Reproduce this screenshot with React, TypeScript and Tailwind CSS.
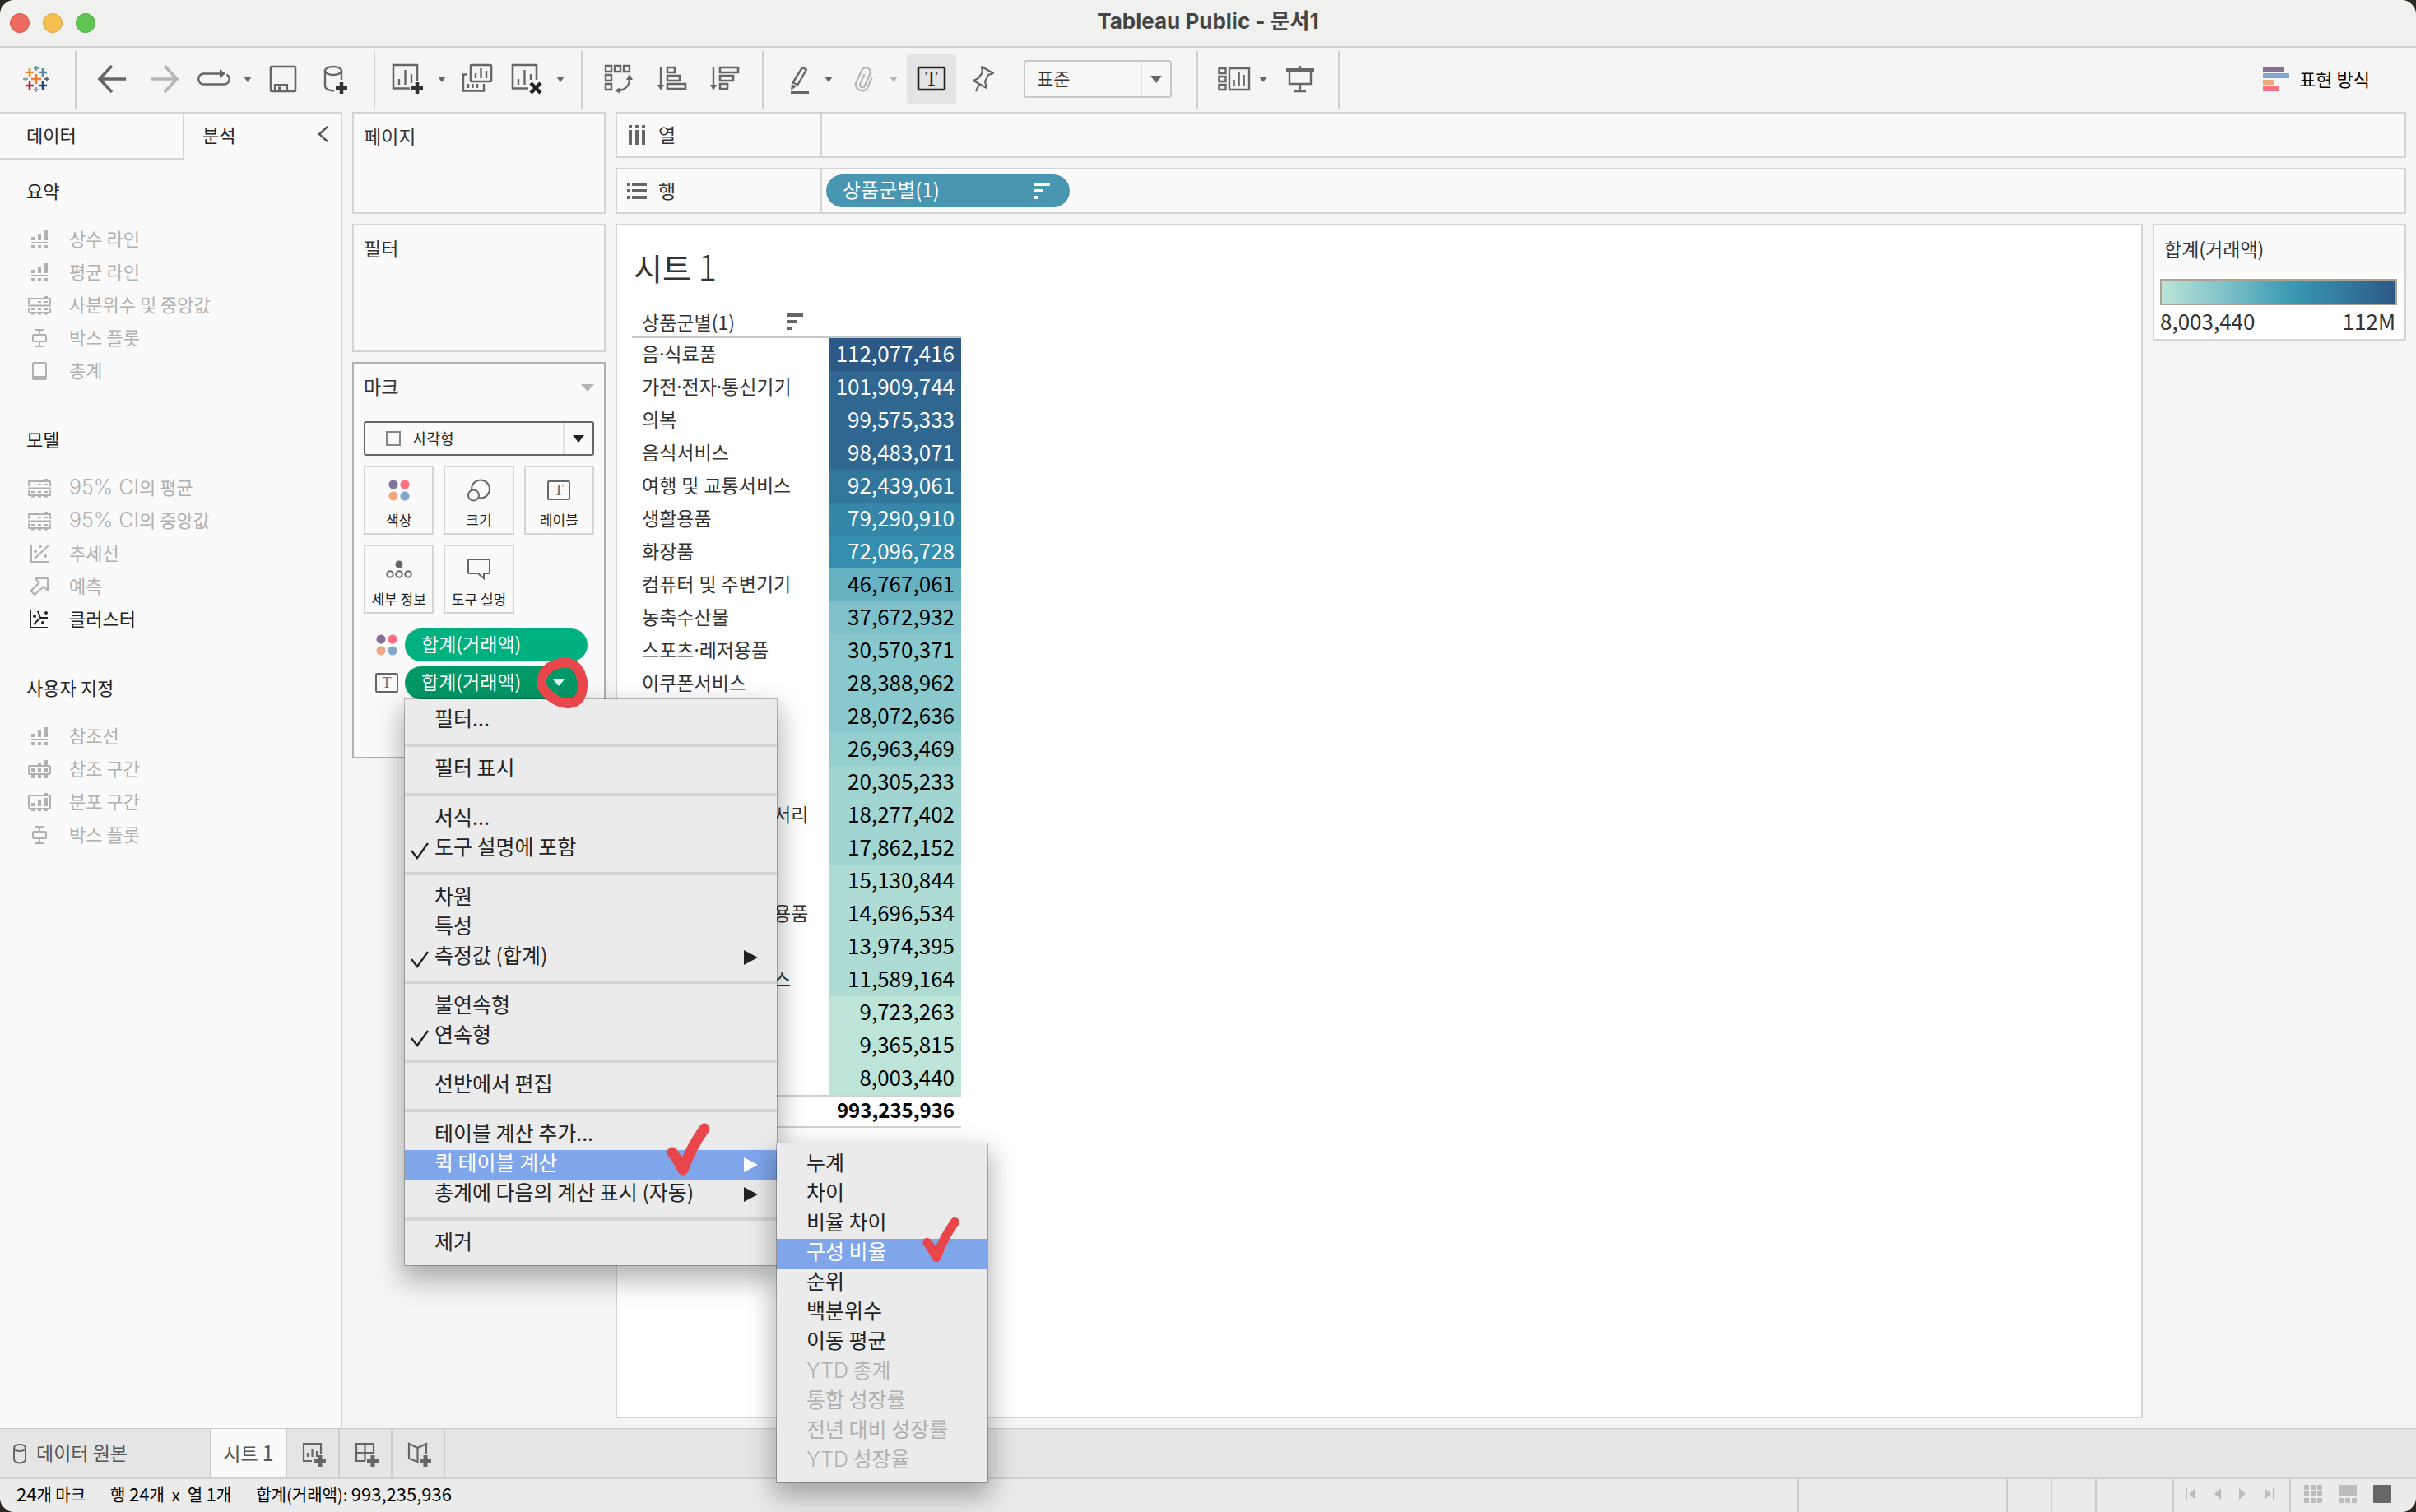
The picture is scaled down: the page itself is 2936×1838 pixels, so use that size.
import React from 'react';
import clsx from 'clsx';

type IconProps = { className?: string };

const PALETTE = [
  '#bce4d8', '#aedcd5', '#a1d5d2', '#95cecf', '#89c8cc', '#7ec1ca', '#72bac6', '#66b2c2', '#59acbe', '#4ba5ba',
  '#419eb6', '#3b96b2', '#358ead', '#3586a7', '#347ea1', '#32779b', '#316f96', '#2f6790', '#2d608a', '#2c5985',
];

const ROWS = [
  { label: '음·식료품', value: 112077416 },
  { label: '가전·전자·통신기기', value: 101909744 },
  { label: '의복', value: 99575333 },
  { label: '음식서비스', value: 98483071 },
  { label: '여행 및 교통서비스', value: 92439061 },
  { label: '생활용품', value: 79290910 },
  { label: '화장품', value: 72096728 },
  { label: '컴퓨터 및 주변기기', value: 46767061 },
  { label: '농축수산물', value: 37672932 },
  { label: '스포츠·레저용품', value: 30570371 },
  { label: '이쿠폰서비스', value: 28388962 },
  { label: '가구', value: 28072636 },
  { label: '신발', value: 26963469 },
  { label: '가방', value: 20305233 },
  { label: '패션용품 및 액세서리', value: 18277402 },
  { label: '아동·유아용품', value: 17862152 },
  { label: '서적', value: 15130844 },
  { label: '자동차 및 자동차용품', value: 14696534 },
  { label: '애완용품', value: 13974395 },
  { label: '문화 및 레저서비스', value: 11589164 },
  { label: '기타서비스', value: 9723263 },
  { label: '기타', value: 9365815 },
  { label: '사무·문구', value: 8003440 },
];

const MIN = 8003440;
const MAX = 112077416;

const colorFor = (value: number) => {
  const t = (value - MIN) / (MAX - MIN);
  return PALETTE[Math.round(t * (PALETTE.length - 1))];
};

/* ---------- toolbar icons, all on a 40px grid ---------- */

const ToolIcon = ({ children, className = 'text-[#666]' }: { children: React.ReactNode; className?: string }) => (
  <svg width="40" height="40" viewBox="0 0 40 40" fill="none" stroke="currentColor" strokeWidth="2.6" className={clsx('shrink-0', className)}>
    {children}
  </svg>
);

const Caret = ({ className = 'text-[#666]' }: IconProps) => (
  <svg width="10" height="7" viewBox="0 0 10 7" className={clsx('shrink-0', className)}>
    <path d="M0 0H10L5 7Z" fill="currentColor" />
  </svg>
);

const LOGO = [
  [19, 20, 6, '#eb7a2e', 2.6],
  [11, 12, 5, '#eb912b', 2.6],
  [27, 12, 5, '#59879b', 2.6],
  [11, 28, 5, '#c8203c', 2.6],
  [27, 28, 5, '#1f447e', 2.6],
  [19, 7, 3, '#7199a6', 2],
  [6, 20, 3, '#7aa1b8', 2],
  [32, 20, 3, '#5b6591', 2],
  [19, 33, 3, '#8f9bbd', 2],
] as const;

const LogoIcon = () => (
  <ToolIcon>
    {LOGO.map(([x, y, r, color, w]) => (
      <path key={`${x}-${y}`} d={`M${x - r} ${y}H${x + r}M${x} ${y - r}V${y + r}`} stroke={color} strokeWidth={w} />
    ))}
  </ToolIcon>
);

const BackIcon = () => (
  <ToolIcon>
    <path d="M37 20H5M20 4L5 20L20 36" strokeWidth="3.6" />
  </ToolIcon>
);

const ForwardIcon = () => (
  <ToolIcon className="text-[#b4b4b4]">
    <path d="M3 20H35M20 4L35 20L20 36" strokeWidth="3.6" />
  </ToolIcon>
);

const ReplayIcon = () => (
  <ToolIcon>
    <path d="M28 13.500H7.500A6.300 6.300 0 0 0 1.300 20A6.300 6.300 0 0 0 7.500 26.500H32.500A6.300 6.300 0 0 0 38.700 20A6.500 6.500 0 0 0 35.500 14.500" strokeWidth="2.400" />
    <path d="M27 8L34 13.500L27 19Z" fill="currentColor" stroke="none" />
  </ToolIcon>
);

const SaveIcon = () => (
  <ToolIcon>
    <rect x="5" y="5" width="30" height="30" rx="1" />
    <path d="M10 35V27H25V35" strokeWidth="2.200" />
    <rect x="14" y="29.500" width="4" height="6" fill="currentColor" stroke="none" />
  </ToolIcon>
);

const AddDataIcon = () => (
  <ToolIcon>
    <ellipse cx="17" cy="10" rx="10" ry="5" strokeWidth="2.400" />
    <path d="M7 10V29Q8 34 18 34.500M27 10V21" strokeWidth="2.400" />
    <path d="M20 31H34M27 24V38" stroke="#333" strokeWidth="4.500" />
  </ToolIcon>
);

const NewSheetIcon = () => (
  <ToolIcon>
    <path d="M23 31.500H3V3H32V22" />
    <path d="M10 20V27M17.500 9V27M25 14V25" strokeWidth="2.400" />
    <path d="M25 31H39M32 24V38" stroke="#333" strokeWidth="4.500" />
  </ToolIcon>
);

const DuplicateIcon = () => (
  <ToolIcon>
    <rect x="12" y="3" width="25" height="20" rx="1" />
    <path d="M18 13V19M24.500 7V19M31 10V19" strokeWidth="2.400" />
    <path d="M8 14.500H3V34.500H28V26M9 26V31M14.500 26V31M20 26V31" strokeWidth="2.400" />
  </ToolIcon>
);

const ClearSheetIcon = () => (
  <ToolIcon>
    <path d="M22 31.500H3V3H32V21" />
    <path d="M10 20V27M17.500 9V27M25 14V21" strokeWidth="2.400" />
    <path d="M25 25L37 37M37 25L25 37" stroke="#222" strokeWidth="4.500" />
  </ToolIcon>
);

const SwapIcon = () => (
  <ToolIcon>
    <path d="M5 4h7v7h-7ZM16 4h7v7h-7ZM27 4h7v7h-7ZM5 15h7v7h-7ZM5 26h7v7h-7Z" strokeWidth="2.400" />
    <path d="M34 20C34 28 29 33 21 34" strokeWidth="2.400" />
    <path d="M34 14L30 21H38ZM16 34L23 30V38Z" fill="currentColor" stroke="none" />
  </ToolIcon>
);

const SortAscIcon = () => (
  <ToolIcon>
    <path d="M6 5V30" strokeWidth="2.400" />
    <path d="M2 27H10L6 34Z" fill="currentColor" stroke="none" />
    <path d="M14 6h9v6h-9ZM14 16h15v6h-15ZM14 26h22v6h-22Z" />
  </ToolIcon>
);

const SortDescIcon = () => (
  <ToolIcon>
    <path d="M6 5V30" strokeWidth="2.400" />
    <path d="M2 27H10L6 34Z" fill="currentColor" stroke="none" />
    <path d="M14 6h22v6h-22ZM14 16h16v6h-16ZM14 26h9v6h-9Z" />
  </ToolIcon>
);

const HighlightIcon = () => (
  <ToolIcon>
    <path d="M23 6L28 8.500L17.500 27L11.500 24.500Z" strokeWidth="2.400" strokeLinejoin="round" />
    <path d="M10 26L16 29L9 34Z" fill="currentColor" stroke="none" />
    <rect x="9" y="35" width="22" height="3" fill="currentColor" stroke="none" />
  </ToolIcon>
);

const ClipIcon = () => (
  <ToolIcon className="text-[#b4b4b4]">
    <path transform="rotate(24 20 20)" d="M19 14V27A3 3 0 0 0 25 27V11A5.500 5.500 0 0 0 14 11V29A8 8 0 0 0 29 29V14" strokeWidth="2.200" />
  </ToolIcon>
);

const LabelIcon = ({ className = 'text-[#222]' }: IconProps) => (
  <ToolIcon className={className}>
    <rect x="4" y="6" width="32" height="27" rx="1" />
    <text x="20" y="28" textAnchor="middle" fontSize="25" fill="currentColor" stroke="none" className="font-['Liberation_Serif',serif]">
      T
    </text>
  </ToolIcon>
);

const PinIcon = () => (
  <ToolIcon>
    <path d="M18 5L32 13L26 15L22 23L24 31L8 22L14 19L19 12ZM15 26L11 35" strokeWidth="2.200" strokeLinejoin="round" />
  </ToolIcon>
);

const CardsIcon = () => (
  <ToolIcon>
    <path d="M1.500 7h8v6h-8ZM1.500 17h8v6h-8ZM1.500 27h8v6h-8ZM14 7H38V33H14Z" strokeWidth="2.400" />
    <path d="M19.500 21V29M25.500 11V29M31.500 15V29" />
  </ToolIcon>
);

const PresentIcon = () => (
  <ToolIcon>
    <path d="M7 10V26H33V10M20 26V35M13 35H27M20 4V8" strokeWidth="2.400" />
    <rect x="3" y="7" width="34" height="4" fill="currentColor" stroke="none" />
  </ToolIcon>
);

/* ---------- analytics pane icons ---------- */

const PaneIcon = ({ children }: { children: React.ReactNode }) => (
  <svg width="28" height="26" viewBox="0 0 28 26" fill="none" stroke="currentColor" strokeWidth="2" className="shrink-0">
    {children}
  </svg>
);

const LineIcon = () => (
  <PaneIcon>
    <path d="M4 10h4v4h-4ZM12 6h4v8h-4ZM20 2h4v12h-4ZM4 16h20v2h-20ZM4 20h4v4h-4ZM12 20h4v4h-4ZM20 20h4v4h-4Z" fill="currentColor" stroke="none" />
  </PaneIcon>
);

const QuartileIcon = () => (
  <PaneIcon>
    <path d="M1 11V5H27V11M0 13.500H28M1 16V22H27V16" strokeWidth="1.800" />
    <path d="M12 8h4v2h-4ZM20 8h4v2h-4ZM4 17h4v2h-4ZM12 17h4v2h-4ZM20 17h4v2h-4ZM4 22h4v2.500h-4ZM12 22h4v2.500h-4ZM20 22h4v2.500h-4ZM20 2h4v3h-4Z" fill="currentColor" stroke="none" />
  </PaneIcon>
);

const BoxPlotIcon = () => (
  <PaneIcon>
    <rect x="6" y="9" width="16" height="8" rx="1" />
    <path d="M9 3H19M14 3V9M14 17V23M9 23H19" />
  </PaneIcon>
);

const TotalIcon = () => (
  <PaneIcon>
    <rect x="6" y="3" width="16" height="20" rx="1" />
    <rect x="6" y="19" width="16" height="4" fill="currentColor" stroke="none" />
  </PaneIcon>
);

const TrendIcon = () => (
  <PaneIcon>
    <path d="M4 2V23H25M8 19L25 3" />
    <path d="M7 10a2 2 0 1 0 4 0a2 2 0 1 0-4 0M13 4a2 2 0 1 0 4 0a2 2 0 1 0-4 0M19 16a2 2 0 1 0 4 0a2 2 0 1 0-4 0" fill="currentColor" stroke="none" />
  </PaneIcon>
);

const ForecastIcon = () => (
  <PaneIcon>
    <path d="M9 3H24V18L19 13L8 23L3.500 18L13.500 8.500Z" strokeLinejoin="round" />
  </PaneIcon>
);

const ClusterIcon = () => (
  <PaneIcon>
    <path d="M3 2V23H24M7 19L15 11H24M15 11L12 3" />
    <path d="M6 9a2 2 0 1 0 4 0a2 2 0 1 0-4 0M20 5a2 2 0 1 0 4 0a2 2 0 1 0-4 0M16 17a2 2 0 1 0 4 0a2 2 0 1 0-4 0" fill="currentColor" stroke="none" />
  </PaneIcon>
);

const BandIcon = () => (
  <PaneIcon>
    <rect x="1" y="9" width="26" height="10" rx="1" />
    <path d="M4 12h4v4h-4ZM12 12h4v4h-4ZM20 12h4v4h-4ZM12 6h4v2h-4ZM20 2h4v6h-4ZM4 20h4v4h-4ZM12 20h4v4h-4ZM20 20h4v4h-4Z" fill="currentColor" stroke="none" />
  </PaneIcon>
);

const DistributionIcon = () => (
  <PaneIcon>
    <rect x="1" y="5" width="26" height="16" rx="1" />
    <path d="M4 14h4v4h-4ZM12 10h4v8h-4ZM20 8h4v10h-4ZM20 2h4v2h-4ZM4 22h4v2h-4ZM12 22h4v2h-4ZM20 22h4v2h-4Z" fill="currentColor" stroke="none" />
  </PaneIcon>
);

const SECTIONS = [
  {
    title: '요약',
    items: [
      { label: '상수 라인', icon: LineIcon },
      { label: '평균 라인', icon: LineIcon },
      { label: '사분위수 및 중앙값', icon: QuartileIcon },
      { label: '박스 플롯', icon: BoxPlotIcon },
      { label: '총계', icon: TotalIcon },
    ],
  },
  {
    title: '모델',
    items: [
      { latin: '95% CI', label: '의 평균', icon: QuartileIcon },
      { latin: '95% CI', label: '의 중앙값', icon: QuartileIcon },
      { label: '추세선', icon: TrendIcon },
      { label: '예측', icon: ForecastIcon },
      { label: '클러스터', icon: ClusterIcon, enabled: true },
    ],
  },
  {
    title: '사용자 지정',
    items: [
      { label: '참조선', icon: LineIcon },
      { label: '참조 구간', icon: BandIcon },
      { label: '분포 구간', icon: DistributionIcon },
      { label: '박스 플롯', icon: BoxPlotIcon },
    ],
  },
] as { title: string; items: { latin?: string; label: string; icon: React.FC; enabled?: boolean }[] }[];

const Latin = ({ children }: { children: React.ReactNode }) => (
  <span className="font-['Inter',sans-serif] text-[25px] leading-none font-light">{children}</span>
);

/* ---------- marks card icons ---------- */

const ColorDots = () => (
  <svg width="28" height="28" viewBox="0 0 28 28" className="shrink-0">
    <circle cx="7" cy="7" r="5.600" fill="#857196" />
    <circle cx="21" cy="7" r="5.600" fill="#f97080" />
    <circle cx="7" cy="21" r="5.600" fill="#f1a67b" />
    <circle cx="21" cy="21" r="5.600" fill="#83a5cb" />
  </svg>
);

const SizeIcon = () => (
  <svg width="28" height="28" viewBox="0 0 28 28" fill="none" stroke="#666" strokeWidth="2">
    <circle cx="16" cy="12.500" r="11" />
    <circle cx="7.500" cy="20" r="6.500" fill="#fafafa" />
  </svg>
);

const SmallLabelIcon = () => (
  <svg width="28" height="28" viewBox="0 0 28 28" fill="none" stroke="#666" strokeWidth="2" className="shrink-0">
    <rect x="1" y="3" width="26" height="22" rx="1" />
    <text x="14" y="20" textAnchor="middle" fontSize="18" fill="#666" stroke="none" className="font-['Liberation_Serif',serif]">
      T
    </text>
  </svg>
);

const DetailIcon = () => (
  <svg width="32" height="28" viewBox="0 0 32 28" fill="none" stroke="#666" strokeWidth="2">
    <circle cx="16" cy="8" r="4.500" fill="#666" stroke="none" />
    <circle cx="5" cy="20" r="3.700" />
    <circle cx="16" cy="20" r="3.700" />
    <circle cx="27" cy="20" r="3.700" />
  </svg>
);

const TooltipIcon = () => (
  <svg width="28" height="28" viewBox="0 0 28 28" fill="none" stroke="#666" strokeWidth="2">
    <path d="M2 2H26Q27 2 27 3V18Q27 19 26 19H20V25L13 19H2Q1 19 1 18V3Q1 2 2 2Z" />
  </svg>
);

const MARK_BUTTONS = [
  { label: '색상', icon: ColorDots },
  { label: '크기', icon: SizeIcon },
  { label: '레이블', icon: SmallLabelIcon },
  { label: '세부 정보', icon: DetailIcon },
  { label: '도구 설명', icon: TooltipIcon },
];

const SortBars = ({ className }: IconProps) => (
  <svg width="20" height="20" viewBox="0 0 20 20" fill="currentColor" className={clsx('shrink-0', className)}>
    <path d="M0 0h20v4h-20ZM0 8h12v4h-12ZM0 16h6v4h-6Z" />
  </svg>
);

const RedCheck = ({ className }: IconProps) => (
  <svg viewBox="0 0 56 66" fill="none" stroke="#e8464b" strokeWidth="13" strokeLinecap="round" strokeLinejoin="round" className={className}>
    <path d="M8 37Q15 46 21 58Q30 32 47 8" />
  </svg>
);

/* ---------- menus ---------- */

interface MenuEntry {
  label: string;
  latin?: string;
  checked?: boolean;
  arrow?: boolean;
  active?: boolean;
  disabled?: boolean;
}

const MENU: MenuEntry[][] = [
  [{ label: '필터...' }],
  [{ label: '필터 표시' }],
  [{ label: '서식...' }, { label: '도구 설명에 포함', checked: true }],
  [{ label: '차원' }, { label: '특성' }, { label: '측정값 (합계)', checked: true, arrow: true }],
  [{ label: '불연속형' }, { label: '연속형', checked: true }],
  [{ label: '선반에서 편집' }],
  [
    { label: '테이블 계산 추가...' },
    { label: '퀵 테이블 계산', arrow: true, active: true },
    { label: '총계에 다음의 계산 표시 (자동)', arrow: true },
  ],
  [{ label: '제거' }],
];

const SUBMENU: MenuEntry[] = [
  { label: '누계' },
  { label: '차이' },
  { label: '비율 차이' },
  { label: '구성 비율', active: true },
  { label: '순위' },
  { label: '백분위수' },
  { label: '이동 평균' },
  { latin: 'YTD', label: ' 총계', disabled: true },
  { label: '통합 성장률', disabled: true },
  { label: '전년 대비 성장률', disabled: true },
  { latin: 'YTD', label: ' 성장율', disabled: true },
];

const MenuItem = ({ entry, children }: { entry: MenuEntry; children?: React.ReactNode }) => (
  <div className="relative">
    <button
      type="button"
      role="menuitem"
      disabled={entry.disabled}
      className={clsx(
        'flex h-9 w-full items-center pr-[23px] pb-2 text-left text-[25px] leading-7 whitespace-nowrap',
        entry.active ? 'bg-[#7fa5eb] text-white' : entry.disabled ? 'text-[#b0b0b0]' : 'text-[#222]',
      )}
    >
      <span className="flex w-9 shrink-0 items-center pt-3 pl-[6px]">
        {entry.checked && (
          <svg width="24" height="24" viewBox="0 0 24 24" fill="none" stroke="currentColor" strokeWidth="2.400">
            <path d="M2 12L9 21L22 3" />
          </svg>
        )}
      </span>
      <span className="flex-1">
        {entry.latin && <Latin>{entry.latin}</Latin>}
        {entry.label}
      </span>
      {entry.arrow && (
        <svg width="17" height="18" viewBox="0 0 17 18" className="mt-2">
          <path d="M0 0L17 9L0 18Z" fill="currentColor" />
        </svg>
      )}
    </button>
    {children}
  </div>
);

const SubMenu = () => (
  <div role="menu" className="absolute -top-2 left-full z-20 w-64 bg-[#ebebeb] py-2 shadow-[0_0_0_1px_rgba(0,0,0,0.25),0_14px_30px_4px_rgba(0,0,0,0.3)]">
    {SUBMENU.map((entry) => (
      <MenuItem key={entry.label} entry={entry}>
        {entry.active && <RedCheck className="absolute -top-7 right-8 z-30 h-[58px] w-12" />}
      </MenuItem>
    ))}
  </div>
);

const ContextMenu = () => (
  <div role="menu" className="absolute top-full left-0 z-20 w-[452px] bg-[#ebebeb] pt-2 pb-2 shadow-[0_0_0_1px_rgba(0,0,0,0.25),0_14px_30px_4px_rgba(0,0,0,0.3)]">
    {MENU.map((group, i) => (
      <div
        key={group[0].label}
        className={clsx(i > 0 && 'border-t-4 border-[#d4d4d4] pt-[10px]', i < MENU.length - 1 && 'pb-[10px]')}
      >
        {group.map((entry) => (
          <MenuItem key={entry.label} entry={entry}>
            {entry.active && (
              <>
                <SubMenu />
                <RedCheck className="absolute right-[79px] bottom-1 z-30 h-[66px] w-14" />
              </>
            )}
          </MenuItem>
        ))}
      </div>
    ))}
  </div>
);

/* ---------- page parts ---------- */

const TitleBar = () => (
  <header className="relative flex h-[58px] items-center justify-center border-b-2 border-[#d0d0d0] bg-[#f0f0ee]">
    <div className="absolute left-3 flex gap-4">
      <button type="button" aria-label="닫기" className="size-6 rounded-full border border-[#d4564c] bg-[#ed6a5e]" />
      <button type="button" aria-label="최소화" className="size-6 rounded-full border border-[#d9a03c] bg-[#f5bf4f]" />
      <button type="button" aria-label="확대" className="size-6 rounded-full border border-[#4ba73e] bg-[#61c554]" />
    </div>
    <h1 className="pb-1 font-['Inter','Noto_Sans_CJK_KR',sans-serif] text-[26px] leading-8 font-bold text-[#444]">Tableau Public - 문서1</h1>
  </header>
);

const Tool = ({ label, className, children }: { label: string; className: string; children: React.ReactNode }) => (
  <button type="button" aria-label={label} className={clsx('flex h-[60px] shrink-0 items-center justify-center', className)}>
    {children}
  </button>
);

const groupClass = 'flex h-[70px] shrink-0 items-center border-r-2 border-[#d0d0d0] pb-[2px]';

const Toolbar = () => (
  <div className="flex h-[78px] items-center bg-[#f5f5f5]">
    <div className={clsx(groupClass, 'w-[93px]')}>
      <Tool label="시작 페이지" className="w-[89px]"><LogoIcon /></Tool>
    </div>
    <div className={clsx(groupClass, 'pr-3 pl-[11px]')}>
      <Tool label="실행 취소" className="w-16"><BackIcon /></Tool>
      <Tool label="다시 실행" className="w-16"><ForwardIcon /></Tool>
      <Tool label="재생" className="w-14"><ReplayIcon /></Tool>
      <Tool label="재생 옵션" className="w-[26px]"><Caret /></Tool>
      <Tool label="저장" className="w-[60px]"><SaveIcon /></Tool>
      <Tool label="새 데이터 원본" className="w-[68px]"><AddDataIcon /></Tool>
    </div>
    <div className={clsx(groupClass, 'pr-[18px] pl-[14px]')}>
      <Tool label="새 워크시트" className="w-[50px]"><NewSheetIcon /></Tool>
      <Tool label="새 워크시트 옵션" className="w-[34px]"><Caret /></Tool>
      <Tool label="복제" className="w-[52px]"><DuplicateIcon /></Tool>
      <Tool label="시트 지우기" className="w-[68px]"><ClearSheetIcon /></Tool>
      <Tool label="지우기 옵션" className="w-[14px]"><Caret /></Tool>
    </div>
    <div className={clsx(groupClass, 'pr-[14px] pl-[10px]')}>
      <Tool label="행과 열 바꾸기" className="w-[66px]"><SwapIcon /></Tool>
      <Tool label="오름차순 정렬" className="w-[66px]"><SortAscIcon /></Tool>
      <Tool label="내림차순 정렬" className="w-[62px]"><SortDescIcon /></Tool>
    </div>
    <div className={clsx(groupClass, 'pr-[30px] pl-[22px]')}>
      <Tool label="하이라이트" className="w-11"><HighlightIcon /></Tool>
      <Tool label="하이라이트 옵션" className="w-[26px]"><Caret /></Tool>
      <Tool label="그룹" className="w-[58px]"><ClipIcon /></Tool>
      <Tool label="그룹 옵션" className="mr-2 w-4"><Caret className="text-[#b4b4b4]" /></Tool>
      <Tool label="마크 레이블 표시" className="w-[60px] rounded-sm bg-[#e4e4e4]"><LabelIcon /></Tool>
      <Tool label="축 고정" className="w-[66px]"><PinIcon /></Tool>
      <div className="relative ml-4 flex h-[46px] w-[180px] items-center rounded-[4px] border-2 border-[#c8c8c8] bg-[#f7f7f7]">
        <select aria-label="맞춤" className="h-full w-full appearance-none pb-1 pl-[14px] text-[22px] leading-8 text-[#333]">
          <option>표준</option>
        </select>
        <span className="pointer-events-none absolute right-0 flex h-full w-9 items-center justify-center border-l-2 border-[#e2e2e2]">
          <svg width="14" height="9" viewBox="0 0 14 9"><path d="M0 0H14L7 9Z" fill="#666" /></svg>
        </span>
      </div>
    </div>
    <div className={clsx(groupClass, 'pr-[6px] pl-[14px]')}>
      <Tool label="카드 표시" className="w-[60px]"><CardsIcon /></Tool>
      <Tool label="카드 옵션" className="w-[10px]"><Caret /></Tool>
      <Tool label="프레젠테이션 모드" className="w-20"><PresentIcon /></Tool>
    </div>
    <button type="button" className="mr-14 ml-auto flex items-center gap-3 pb-[2px] text-[22px] leading-8 text-black">
      <svg width="32" height="30" viewBox="0 0 32 30">
        <rect width="25" height="6" fill="#857196" />
        <rect y="8" width="32" height="6" fill="#83a5cb" />
        <rect y="16" width="13" height="6" fill="#f1a67b" />
        <rect y="24" width="19" height="6" fill="#f97080" />
      </svg>
      <span className="pb-[2px]">표현 방식</span>
    </button>
  </div>
);

const AnalyticsPane = () => (
  <aside className="w-[416px] shrink-0 border-t-2 border-r-2 border-[#d4d4d4] bg-[#fafafa] text-[22px] leading-8">
    <div className="flex h-14">
      <button type="button" className="w-[224px] border-r-2 border-b-2 border-[#d4d4d4] pb-1 pl-8 text-left text-[#222]">데이터</button>
      <button type="button" className="flex flex-1 items-center justify-between pr-[14px] pb-[6px] pl-[22px] text-[#222]">
        분석
        <svg width="14" height="20" viewBox="0 0 14 20" fill="none" stroke="#555" strokeWidth="2.400"><path d="M12 1L2 10L12 19" /></svg>
      </button>
    </div>
    <div className="flex flex-col gap-11 pt-[19px]">
      {SECTIONS.map((section) => (
        <section key={section.title}>
          <h2 className="mb-[18px] flex h-10 items-center pb-1 pl-8 text-[#222]">{section.title}</h2>
          <ul>
            {section.items.map((item) => (
              <li key={item.label}>
                <button
                  type="button"
                  disabled={!item.enabled}
                  className={clsx('flex h-10 items-center gap-[22px] pl-[34px] whitespace-nowrap', item.enabled ? 'text-[#222]' : 'text-[#b0b0b0]')}
                >
                  <item.icon />
                  <span className="pb-1">
                    {item.latin && <Latin>{item.latin}</Latin>}
                    {item.label}
                  </span>
                </button>
              </li>
            ))}
          </ul>
        </section>
      ))}
    </div>
  </aside>
);

const MarksCard = () => (
  <section className="h-[482px] border-2 border-[#b0b0b0] bg-[#fafafa] px-3">
    <div className="flex h-[58px] items-center justify-between">
      <h2 className="pb-1">마크</h2>
      <svg width="16" height="9" viewBox="0 0 16 9"><path d="M0 0H16L8 9Z" fill="#b4b4b4" /></svg>
    </div>
    <div className="relative mt-3 flex h-[42px] items-center rounded-[3px] border-2 border-[#666]">
      <span className="pointer-events-none absolute left-[25px] size-[18px] border-2 border-[#888]" />
      <select aria-label="마크 유형" className="h-full w-full appearance-none pb-[2px] pl-[58px] text-[18px] leading-7 text-[#222]">
        <option>사각형</option>
      </select>
      <span className="pointer-events-none absolute right-0 flex h-full w-9 items-center justify-center border-l-2 border-[#e2e2e2]">
        <svg width="14" height="9" viewBox="0 0 14 9"><path d="M0 0H14L7 9Z" fill="#222" /></svg>
      </span>
    </div>
    <div className="mt-3 grid grid-cols-3 gap-3">
      {MARK_BUTTONS.map((mark) => (
        <button key={mark.label} type="button" className="flex h-[84px] flex-col items-center gap-3 border-2 border-[#d4d4d4] pt-[14px] text-[17px] leading-5 whitespace-nowrap text-[#222]">
          <mark.icon />
          {mark.label}
        </button>
      ))}
    </div>
    <div className="mt-[18px] flex flex-col gap-[6px] pl-[14px]">
      <div className="flex h-10 items-center gap-2">
        <ColorDots />
        <button type="button" className="h-10 w-[222px] rounded-full bg-[#00b180] pb-1 pl-5 text-left text-white">합계(거래액)</button>
      </div>
      <div className="flex h-10 items-center gap-2">
        <SmallLabelIcon />
        <div className="relative">
          <button type="button" className="flex h-10 w-[222px] items-center justify-between rounded-full bg-[#009866] pr-[28px] pl-5 text-left text-white">
            <span className="pb-1">합계(거래액)</span>
            <svg width="14" height="8" viewBox="0 0 14 8"><path d="M0 0H14L7 8Z" fill="#e6f7f0" /></svg>
          </button>
          <ContextMenu />
          {/* hand-drawn ring around the drop-down arrow */}
          <svg width="64" height="64" viewBox="0 0 64 64" fill="none" stroke="#e8464b" strokeWidth="12" className="absolute -top-[11px] right-0 z-30">
            <path d="M31 7C41 5 50 8 55 19C60 32 59 48 49 54C38 60 20 52 11 39C3 28 11 11 31 7Z" />
          </svg>
        </div>
      </div>
    </div>
  </section>
);

const CardsColumn = () => (
  <div className="ml-3 flex w-[308px] shrink-0 flex-col gap-3 text-[23px] leading-8 text-[#333]">
    <section className="h-[124px] border-2 border-[#d4d4d4] bg-[#fafafa] px-3">
      <h2 className="flex h-[58px] items-center pb-1">페이지</h2>
    </section>
    <section className="h-[156px] border-2 border-[#d4d4d4] bg-[#fafafa] px-3">
      <h2 className="flex h-[58px] items-center pb-1">필터</h2>
    </section>
    <MarksCard />
  </div>
);

const Shelf = ({ label, icon, children }: { label: string; icon: React.ReactNode; children?: React.ReactNode }) => (
  <div className="flex h-14 border-2 border-[#d4d4d4] bg-[#fafafa] text-[23px] leading-8">
    <div className="flex w-[249px] shrink-0 items-center gap-[14px] border-r-2 border-[#d4d4d4] pl-3 text-[#333]">
      {icon}
      <span className="pb-[2px]">{label}</span>
    </div>
    <div className="flex flex-1 items-center pl-[5px]">{children}</div>
  </div>
);

const SheetView = () => (
  <section className="flex-1 border-2 border-[#d4d4d4] bg-white">
    <h2 className="flex h-[97px] items-center pl-5 text-[38px] leading-none text-[#333]">
      <span>시트 <span className="text-[42px] font-light">1</span></span>
    </h2>
    <table className="ml-[18px] table-fixed border-separate border-spacing-0 text-[23px] leading-8 text-[#333]">
      <colgroup>
        <col className="w-[240px]" />
        <col className="w-[160px]" />
      </colgroup>
      <thead>
        <tr>
          <th scope="col" className="h-10 border-b-2 border-[#c8c8c8] p-0 pr-8 pl-3 text-left font-normal">
            <span className="flex items-center justify-between pt-[2px]">
              상품군별(1)
              <SortBars className="text-[#666]" />
            </span>
          </th>
          <td className="h-10 border-b-2 border-[#c8c8c8] p-0" />
        </tr>
      </thead>
      <tbody>
        {ROWS.map((row) => (
          <tr key={row.label}>
            <th scope="row" className="h-10 p-0 pb-[2px] pl-3 text-left font-['Noto_Sans','Noto_Sans_CJK_KR',sans-serif] font-normal whitespace-nowrap">
              {row.label}
            </th>
            <td
              className={clsx('h-10 p-0 pr-2 pb-1 text-right text-[26px]', row.value > 60000000 ? 'text-white' : 'text-black')}
              style={{ backgroundColor: colorFor(row.value) }}
            >
              {row.value.toLocaleString('en-US')}
            </td>
          </tr>
        ))}
      </tbody>
      <tfoot>
        <tr>
          <th scope="row" className="h-10 border-y-2 border-[#d0d0d0] p-0 pl-3 text-left font-bold">총합계</th>
          <td className="h-10 border-y-2 border-[#d0d0d0] p-0 pr-2 pb-1 text-right text-[24px] font-bold text-black">993,235,936</td>
        </tr>
      </tfoot>
    </table>
  </section>
);

const Legend = () => (
  <aside className="h-[142px] w-[308px] shrink-0 border-2 border-[#d4d4d4] bg-white">
    <h2 className="flex h-[58px] items-center bg-[#fafafa] pb-[2px] pl-3 text-[23px] leading-8 text-[#333]">합계(거래액)</h2>
    <div className="mt-[7px] mr-[9px] ml-[7px] h-8 border-2 border-[#aaa393] bg-[linear-gradient(90deg,#bce4d8,#a1d5d2_11%,#7ec1ca_28%,#59acbe_42%,#419eb6_52%,#358ead_63%,#347ea1_75%,#316f96_85%,#2c5985)]" />
    <div className="mt-[3px] flex justify-between pr-[11px] pl-[7px] text-[26px] leading-8 text-[#333]">
      <span>8,003,440</span>
      <span>112M</span>
    </div>
  </aside>
);

const Plus = () => <path d="M15 23H29M22 16V30" strokeWidth="5" />;

const TabIcon = ({ children }: { children: React.ReactNode }) => (
  <svg width="30" height="32" viewBox="0 0 30 32" fill="none" stroke="#666" strokeWidth="2.200">
    {children}
    <Plus />
  </svg>
);

const newTabClass = 'flex w-16 items-center justify-center border-r-2 border-[#ccc] pt-1 pl-1';

const SheetTabs = () => (
  <nav className="flex h-[60px] border-t border-[#c8c8c8] bg-[#e5e5e5] text-[23px] leading-8 text-[#555]">
    <button type="button" className="flex w-[257px] items-center gap-3 border-r-2 border-[#ccc] pl-4">
      <svg width="16" height="26" viewBox="0 0 16 26" fill="none" stroke="#666" strokeWidth="2">
        <path d="M1 6A7 4 0 0 1 15 6V20A7 4.500 0 0 1 1 20ZM1 6A7 4 0 0 0 15 6" />
      </svg>
      <span className="pb-1">데이터 원본</span>
    </button>
    <button type="button" className="w-[92px] border-r-2 border-[#ccc] bg-[#fafafa] pb-[2px]">
      시트 <span className="text-[25px]">1</span>
    </button>
    <button type="button" aria-label="새 워크시트" className={newTabClass}>
      <TabIcon><path d="M12 23H2V2H23V14M7 13V18M12.500 8V18M18 11V18" /></TabIcon>
    </button>
    <button type="button" aria-label="새 대시보드" className={newTabClass}>
      <TabIcon><path d="M12 23H2V2H23V13H2M12.500 2V23" /></TabIcon>
    </button>
    <button type="button" aria-label="새 스토리" className={newTabClass}>
      <TabIcon><path d="M23 14V2L12.500 7L2 2V20L12.500 24V7" /></TabIcon>
    </button>
  </nav>
);

const StatusBar = () => (
  <footer className="flex h-[42px] border-t-2 border-[#d0d0d0] bg-[#ebebeb] text-[20px] leading-8 whitespace-nowrap text-black">
    <div className="flex items-center gap-[30px] pb-1 pl-5">
      <span><span className="text-[22px]">24</span>개 마크</span>
      <span>행 <span className="text-[22px]">24</span>개 &nbsp;x&nbsp; 열 <span className="text-[22px]">1</span>개</span>
      <span>합계(거래액): <span className="text-[22px]">993,235,936</span></span>
    </div>
    <div className="ml-auto w-[254px] border-l-2 border-[#ccc]" />
    <div className="w-[54px] border-l-2 border-[#ccc]" />
    <div className="w-[54px] border-l-2 border-[#ccc]" />
    <div className="w-[94px] border-l-2 border-[#ccc]" />
    <div className="flex w-[142px] items-center justify-between border-l-2 border-[#ccc] pr-[18px] pb-1 pl-[14px]">
      <button type="button" aria-label="처음" disabled>
        <svg width="12" height="14" viewBox="0 0 12 14" fill="#bcbcbc"><path d="M0 0h2v14h-2ZM12 0V14L4 7Z" /></svg>
      </button>
      <button type="button" aria-label="이전" disabled>
        <svg width="8" height="14" viewBox="0 0 8 14" fill="#bcbcbc"><path d="M8 0V14L0 7Z" /></svg>
      </button>
      <button type="button" aria-label="다음" disabled>
        <svg width="8" height="14" viewBox="0 0 8 14" fill="#bcbcbc"><path d="M0 0V14L8 7Z" /></svg>
      </button>
      <button type="button" aria-label="마지막" disabled>
        <svg width="12" height="14" viewBox="0 0 12 14" fill="#bcbcbc"><path d="M10 0h2v14h-2ZM0 0V14L8 7Z" /></svg>
      </button>
    </div>
    <div className="flex w-[154px] items-center gap-5 border-l-2 border-[#ccc] pb-1 pl-4">
      <button type="button" aria-label="시트 정렬기">
        <svg width="22" height="22" viewBox="0 0 22 22" fill="#bcbcbc">
          {[0, 8, 16].map((y) => <path key={y} d={`M0 ${y}h6v6h-6ZM8 ${y}h6v6h-6ZM16 ${y}h6v6h-6Z`} />)}
        </svg>
      </button>
      <button type="button" aria-label="필름스트립">
        <svg width="22" height="22" viewBox="0 0 22 22" fill="#bcbcbc"><path d="M0 0h22v14h-22ZM0 16h6v6h-6ZM8 16h6v6h-6ZM16 16h6v6h-6Z" /></svg>
      </button>
      <button type="button" aria-label="탭 표시">
        <svg width="22" height="22" viewBox="0 0 22 22"><rect width="22" height="22" rx="1" fill="#666" /></svg>
      </button>
    </div>
  </footer>
);

export default function App() {
  return (
    <div className="min-h-screen bg-[#2a2820] font-['Noto_Sans_CJK_KR',sans-serif]">
      <div className="flex min-h-screen flex-col overflow-hidden rounded-[18px] bg-[#f5f5f5]">
        <TitleBar />
        <Toolbar />
        <main className="flex flex-1">
          <AnalyticsPane />
          <CardsColumn />
          <div className="ml-3 flex flex-1 flex-col gap-3 pr-3 pb-3">
            <Shelf
              label="열"
              icon={
                <svg width="24" height="24" viewBox="0 0 24 24" fill="#666">
                  <path d="M2 0h4v4h-4ZM10 0h4v4h-4ZM18 0h4v4h-4ZM2 6h4v18h-4ZM10 6h4v18h-4ZM18 6h4v18h-4Z" />
                </svg>
              }
            />
            <Shelf
              label="행"
              icon={
                <svg width="24" height="20" viewBox="0 0 24 20" fill="#666">
                  <path d="M0 0h4v4h-4ZM6 0h18v4h-18ZM0 8h4v4h-4ZM6 8h18v4h-18ZM0 16h4v4h-4ZM6 16h18v4h-18Z" />
                </svg>
              }
            >
              <button type="button" className="flex h-10 w-[296px] items-center justify-between rounded-full bg-[#4996b2] pr-6 pl-5 text-white">
                <span className="pb-1 text-[24px]">상품군별(1)</span>
                <SortBars />
              </button>
            </Shelf>
            <div className="flex flex-1 items-start gap-3">
              <div className="flex flex-1 self-stretch">
                <SheetView />
              </div>
              <Legend />
            </div>
          </div>
        </main>
        <SheetTabs />
        <StatusBar />
      </div>
    </div>
  );
}
